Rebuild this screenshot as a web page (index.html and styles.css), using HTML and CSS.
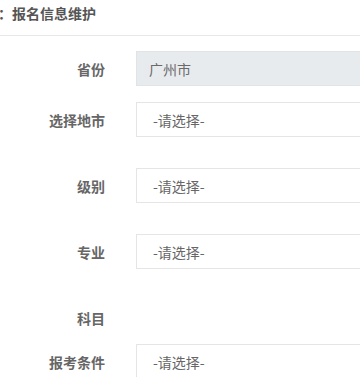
FILE: index.html
```html
<!DOCTYPE html>
<html lang="zh-CN">
<head>
<meta charset="utf-8">
<title>报名信息维护</title>
<link rel="stylesheet" href="styles.css">
</head>
<body>
<div class="page">
  <div class="header"><span class="title">：报名信息维护</span></div>
  <form class="form">
    <div class="row gap-s">
      <label class="label">省份</label>
      <div class="field readonly">广州市</div>
    </div>
    <div class="row gap-l">
      <label class="label">选择地市</label>
      <div class="field select">-请选择-</div>
    </div>
    <div class="row gap-l">
      <label class="label">级别</label>
      <div class="field select">-请选择-</div>
    </div>
    <div class="row gap-l">
      <label class="label">专业</label>
      <div class="field select">-请选择-</div>
    </div>
    <div class="row gap-xs">
      <label class="label">科目</label>
      <div class="empty"></div>
    </div>
    <div class="row">
      <label class="label">报考条件</label>
      <div class="field select">-请选择-</div>
    </div>
  </form>
</div>
</body>
</html>
```

FILE: styles.css
```css
html, body {
  margin: 0;
  padding: 0;
  background: #fff;
}
body {
  font-family: "Noto Sans CJK SC", "Liberation Sans", sans-serif;
  overflow: hidden;
}
.page {
  width: 360px;
  overflow: hidden;
}
.header {
  height: 35px;
  border-bottom: 1px solid #e7e7e7;
  box-sizing: content-box;
}
.title {
  display: block;
  margin-left: -2px;
  line-height: 26px;
  font-size: 14px;
  font-weight: bold;
  color: #555;
  white-space: nowrap;
}
.form {
  margin: 0;
  padding-top: 15px;
}
.row {
  display: flex;
  align-items: center;
  height: 35px;
}
.gap-s { margin-bottom: 16px; }
.gap-l { margin-bottom: 31px; }
.gap-xs { margin-bottom: 9px; }
.label {
  flex: 0 0 105px;
  padding-right: 31px;
  text-align: right;
  font-size: 14px;
  font-weight: bold;
  color: #666;
  white-space: nowrap;
}
.field {
  flex: 0 0 300px;
  height: 35px;
  box-sizing: border-box;
  border: 1px solid #e5e5e5;
  font-size: 14px;
  color: #666;
  display: flex;
  align-items: center;
  white-space: nowrap;
}
.readonly {
  background: #e8ebee;
  border-color: #e1e4e7;
  padding-left: 12px;
  color: #6a6a6a;
}
.select {
  background: #fff;
  padding-left: 16px;
}
.empty {
  flex: 1;
}
```
